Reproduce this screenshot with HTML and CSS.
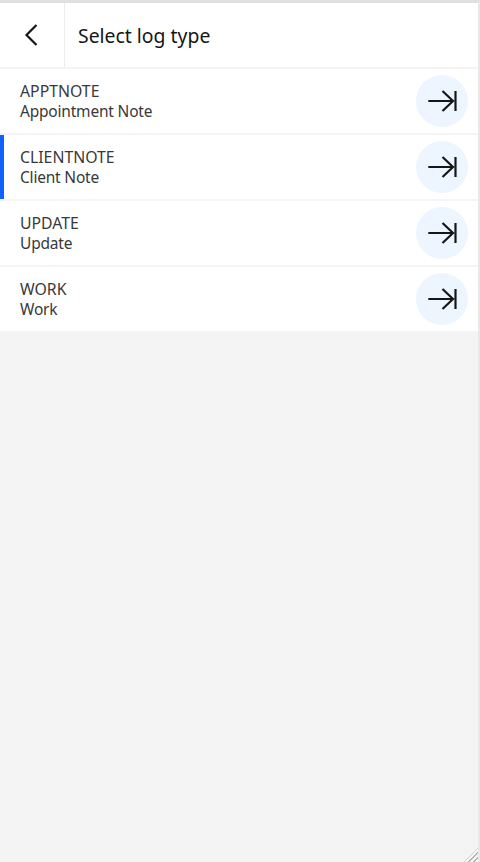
FILE: index.html
```html
<!DOCTYPE html>
<html lang="en">

<head>
  <meta charset="UTF-8">
  <title>Select log type</title>
  <link rel="stylesheet" href="styles.css">
</head>

<body>
  <div class="panel">
    <header class="top-bar">
      <button class="back-btn" aria-label="Back">
        <svg width="32" height="32" viewBox="0 0 32 32" fill="none" stroke="#161616" stroke-width="2.2">
          <path d="M20.5 6 L10.5 16 L20.5 26" />
        </svg>
      </button>
      <h1>Select log type</h1>
    </header>

    <ul class="log-list">
      <li class="log-row">
        <div class="log-text">
          <span class="log-code">APPTNOTE</span>
          <span>Appointment Note</span>
        </div>
        <button class="go-btn" aria-label="Select">
          <svg width="32" height="32" viewBox="0 0 32 32" fill="none" stroke="#161616" stroke-width="2.2">
            <path d="M2.3 16 H27 M16.5 6 L27 16 L16.5 26 M29.5 6 V26" />
          </svg>
        </button>
      </li>
      <li class="log-row active">
        <div class="log-text">
          <span class="log-code">CLIENTNOTE</span>
          <span>Client Note</span>
        </div>
        <button class="go-btn" aria-label="Select">
          <svg width="32" height="32" viewBox="0 0 32 32" fill="none" stroke="#161616" stroke-width="2.2">
            <path d="M2.3 16 H27 M16.5 6 L27 16 L16.5 26 M29.5 6 V26" />
          </svg>
        </button>
      </li>
      <li class="log-row">
        <div class="log-text">
          <span class="log-code">UPDATE</span>
          <span>Update</span>
        </div>
        <button class="go-btn" aria-label="Select">
          <svg width="32" height="32" viewBox="0 0 32 32" fill="none" stroke="#161616" stroke-width="2.2">
            <path d="M2.3 16 H27 M16.5 6 L27 16 L16.5 26 M29.5 6 V26" />
          </svg>
        </button>
      </li>
      <li class="log-row">
        <div class="log-text">
          <span class="log-code">WORK</span>
          <span>Work</span>
        </div>
        <button class="go-btn" aria-label="Select">
          <svg width="32" height="32" viewBox="0 0 32 32" fill="none" stroke="#161616" stroke-width="2.2">
            <path d="M2.3 16 H27 M16.5 6 L27 16 L16.5 26 M29.5 6 V26" />
          </svg>
        </button>
      </li>
    </ul>

    <div class="resize-grip"></div>
  </div>
</body>

</html>
```

FILE: styles.css
```css
* {
  box-sizing: border-box;
}

html,
body {
  height: 100%;
}

body {
  margin: 0;
  font-family: 'Noto Sans', Roboto, Arial, sans-serif;
  color: #161616;
  background: #f4f4f4;
}

.panel {
  position: relative;
  height: 100%;
  border-top: 3px solid #e0e0e0;
  border-right: 2px solid #e8e8e8;
  background: #f4f4f4;
}

.top-bar {
  display: flex;
  align-items: stretch;
  height: 66px;
  background: white;
  border-bottom: 2px solid #f4f4f4;
}

.top-bar h1 {
  margin: 0;
  align-self: center;
  padding-left: 13px;
  font-size: 19.4px;
  font-weight: 400;
}

.back-btn {
  width: 65px;
  padding: 0;
  border: 0;
  border-right: 1px solid #ececec;
  background: none;
}

.back-btn svg,
.go-btn svg {
  display: block;
  margin: 0 auto;
}

.log-list {
  display: flex;
  flex-direction: column;
  gap: 2px;
  margin: 0;
  padding: 0;
  list-style: none;
}

.log-row {
  display: flex;
  align-items: center;
  justify-content: space-between;
  height: 64px;
  padding: 0 10px 0 20px;
  background: white;
}

.log-row.active {
  box-shadow: inset 4px 0 0 #0f62fe;
}

.log-text {
  display: flex;
  flex-direction: column;
  font-size: 15.5px;
  line-height: 20px;
  letter-spacing: -0.2px;
  color: #393939;
}

.log-code {
  font-size: 15.8px;
  letter-spacing: 0;
}

.go-btn {
  width: 52px;
  height: 52px;
  padding: 0;
  border: 0;
  border-radius: 50%;
  background: #edf5ff;
}

.resize-grip {
  position: absolute;
  right: 0;
  bottom: 0;
  width: 14px;
  height: 14px;
  background: repeating-linear-gradient(135deg, transparent 0 1.5px, #b4b4b4 1.5px 3px, transparent 3px 3.6px);
  clip-path: polygon(100% 0, 100% 100%, 0 100%);
}
```
